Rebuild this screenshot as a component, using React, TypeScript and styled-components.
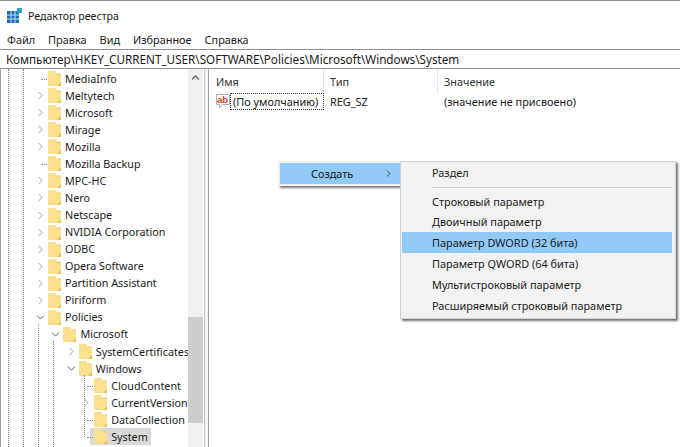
import React from "react";
import styled, { createGlobalStyle } from "styled-components";
import { ChevronRight, ChevronDown, ChevronUp } from "lucide-react";

const GlobalStyle = createGlobalStyle`
  html, body {
    margin: 0;
    padding: 0;
    background: #fff;
  }
`;

const Window = styled.div`
  width: 680px;
  height: 447px;
  position: relative;
  overflow: hidden;
  box-sizing: border-box;
  border-top: 1px solid #8a8a8a;
  background: #fff;
  color: #1a1a1a;
  font-family: "Noto Sans", "Liberation Sans", sans-serif;
  font-size: 10.9px;
  display: flex;
  flex-direction: column;
`;

const TitleBar = styled.div`
  height: 29px;
  display: flex;
  align-items: center;
  gap: 6px;
  padding-left: 7px;
  font-size: 10.6px;
`;

const MenuBar = styled.div`
  height: 19px;
  display: flex;
  align-items: center;
  gap: 13px;
  padding-left: 7px;
`;

const AddressBar = styled.div`
  height: 20px;
  box-sizing: border-box;
  display: flex;
  align-items: center;
  padding-left: 6px;
  border-top: 1px solid #8f8f8f;
  border-bottom: 1px solid #8f8f8f;
  font-size: 11.7px;
  white-space: nowrap;
`;

const Main = styled.div`
  flex: 1;
  min-height: 0;
  display: flex;
`;

const TreePane = styled.div`
  width: 205px;
  position: relative;
  display: flex;
  box-sizing: border-box;
  border-left: 1px solid #a0a0a0;
  border-right: 1px solid #c4c4c4;
  overflow: hidden;
`;

const TreeList = styled.div`
  flex: 1;
  min-width: 0;
  padding-top: 1px;
  overflow: hidden;
  font-size: 10.75px;
`;

const Row = styled.div<{ $level: number }>`
  height: 17.07px;
  display: flex;
  align-items: center;
  padding-left: ${(p) => 32 + p.$level * 15.4}px;
  white-space: nowrap;
`;

const Toggle = styled.span`
  width: 15px;
  height: 15px;
  flex: none;
  display: flex;
  align-items: center;
  justify-content: center;
  color: #8c8c8c;
  position: relative;
`;

const Stub = styled.span`
  position: absolute;
  left: 8px;
  width: 6px;
  top: 8px;
  border-top: 1px dotted #8a8a8a;
`;

const Label = styled.span<{ $selected?: boolean }>`
  display: flex;
  align-items: center;
  gap: 4px;
  height: 17px;
  background: ${(p) => (p.$selected ? "#d9d9d9" : "transparent")};
  margin-left: ${(p) => (p.$selected ? "-4px" : "0")};
  padding: ${(p) => (p.$selected ? "0 3px 0 4px" : "0")};
`;

const Guide = styled.span<{ $left: number; $top: number; $height: number }>`
  position: absolute;
  left: ${(p) => p.$left}px;
  top: ${(p) => p.$top}px;
  height: ${(p) => p.$height}px;
  border-left: 1px dotted #8a8a8a;
`;

const ScrollTrack = styled.div`
  width: 15px;
  margin-right: 1px;
  flex: none;
  background: #f0f0f0;
  display: flex;
  flex-direction: column;
  align-items: center;
  padding-top: 2px;
  color: #505050;
  position: relative;
`;

const ScrollThumb = styled.div`
  position: absolute;
  left: 0;
  right: 0;
  top: 248px;
  height: 106px;
  background: #cdcdcd;
`;

const Splitter = styled.div`
  width: 3px;
  flex: none;
  background: #f4f4f4;
`;

const ListPane = styled.div`
  flex: 1;
  min-width: 0;
  border-left: 1px solid #a0a0a0;
  padding-left: 7px;
`;

const ListGrid = styled.div`
  display: grid;
  grid-template-columns: 108px 114px 1fr;
`;

const HeaderCell = styled.div<{ $pad?: boolean; $last?: boolean }>`
  height: 23px;
  box-sizing: border-box;
  padding-top: 1px;
  display: flex;
  align-items: center;
  padding-left: ${(p) => (p.$pad ? "6px" : "0")};
  border-right: ${(p) => (p.$last ? "0" : "1px solid #e5e5e5")};
  color: #333;
`;

const ValueCell = styled.div<{ $pad?: boolean }>`
  height: 18px;
  display: flex;
  align-items: center;
  padding-left: ${(p) => (p.$pad ? "6px" : "0")};
`;

const ValueName = styled.span`
  border: 1px dotted #333;
  flex: 1;
  height: 17px;
  display: flex;
  align-items: center;
  box-sizing: border-box;
  padding-left: 2px;
  white-space: nowrap;
`;

const ContextMenus = styled.div`
  position: absolute;
  left: 278px;
  top: 160px;
  display: flex;
  align-items: flex-start;
`;

const ParentMenu = styled.div`
  width: 122px;
  height: 25px;
  box-sizing: border-box;
  background: #91c9f7;
  border: 2px solid #f0f0f0;
  border-right: 0;
  box-shadow: 2px 2px 2px #777;
  display: flex;
  align-items: center;
  justify-content: space-between;
  padding: 0 6px 0 31px;
  color: #1a1a1a;
`;

const SubMenu = styled.div`
  width: 276px;
  height: 158px;
  box-sizing: border-box;
  background: #f2f2f2;
  border: 1px solid #cfcfcf;
  box-shadow: 2px 2px 2px #777;
  padding: 0 3px 0 1px;
`;

const MenuItem = styled.div<{ $active?: boolean }>`
  height: 20.8px;
  display: flex;
  align-items: center;
  padding-left: 30px;
  background: ${(p) => (p.$active ? "#91c9f7" : "transparent")};
`;

const MenuSeparator = styled.div`
  height: 1px;
  background: #d0d0d0;
  margin: 4px 0 3px 30px;
`;

function RegistryIcon() {
  return (
    <svg width="15" height="15" viewBox="0 0 15 15">
      <rect x="0" y="3" width="12" height="12" fill="#1c6fb5" />
      <path d="M4 3v12M8 3v12M0 7h12M0 11h12" stroke="#bfe0f5" strokeWidth="1" />
      <path d="M10 0h5v5h-5z" fill="#2fa0dc" />
    </svg>
  );
}

function FolderIcon() {
  return (
    <svg width="13" height="15" viewBox="0 0 13 15" style={{ flex: "none" }}>
      <path d="M0 0h7.5l1 3H13v12H0z" fill="#fbe08f" />
      <path d="M9 15h4v-4z" fill="#e9bd5a" />
      <path d="M8.5 3h4.5" stroke="#eec86e" strokeWidth="1" />
    </svg>
  );
}

function ValueIcon() {
  return (
    <svg width="14" height="15" viewBox="0 0 14 15" style={{ flex: "none" }}>
      <path d="M0.5 0.5h13v10h-7l-3 3v-3h-3z" fill="#fff" stroke="#b0b0b0" strokeWidth="1" />
      <text x="1" y="8.5" fontSize="9.5" fontWeight="700" fontFamily="Liberation Sans, sans-serif" fill="#c8402c">
        ab
      </text>
    </svg>
  );
}

type TreeItem = {
  name: string;
  level: number;
  toggle: "closed" | "open" | "none";
  selected?: boolean;
};

const TREE: TreeItem[] = [
  { name: "MediaInfo", level: 0, toggle: "none" },
  { name: "Meltytech", level: 0, toggle: "closed" },
  { name: "Microsoft", level: 0, toggle: "closed" },
  { name: "Mirage", level: 0, toggle: "closed" },
  { name: "Mozilla", level: 0, toggle: "closed" },
  { name: "Mozilla Backup", level: 0, toggle: "none" },
  { name: "MPC-HC", level: 0, toggle: "closed" },
  { name: "Nero", level: 0, toggle: "closed" },
  { name: "Netscape", level: 0, toggle: "closed" },
  { name: "NVIDIA Corporation", level: 0, toggle: "closed" },
  { name: "ODBC", level: 0, toggle: "closed" },
  { name: "Opera Software", level: 0, toggle: "closed" },
  { name: "Partition Assistant", level: 0, toggle: "closed" },
  { name: "Piriform", level: 0, toggle: "closed" },
  { name: "Policies", level: 0, toggle: "open" },
  { name: "Microsoft", level: 1, toggle: "open" },
  { name: "SystemCertificates", level: 2, toggle: "closed" },
  { name: "Windows", level: 2, toggle: "open" },
  { name: "CloudContent", level: 3, toggle: "none" },
  { name: "CurrentVersion", level: 3, toggle: "closed" },
  { name: "DataCollection", level: 3, toggle: "none" },
  { name: "System", level: 3, toggle: "none", selected: true },
];

const SUBMENU_BOTTOM = [
  "Строковый параметр",
  "Двоичный параметр",
  "Параметр DWORD (32 бита)",
  "Параметр QWORD (64 бита)",
  "Мультистроковый параметр",
  "Расширяемый строковый параметр",
];

export default function App() {
  return (
    <Window>
      <GlobalStyle />
      <TitleBar>
        <RegistryIcon />
        Редактор реестра
      </TitleBar>
      <MenuBar>
        <span>Файл</span>
        <span>Правка</span>
        <span>Вид</span>
        <span>Избранное</span>
        <span>Справка</span>
      </MenuBar>
      <AddressBar>Компьютер\HKEY_CURRENT_USER\SOFTWARE\Policies\Microsoft\Windows\System</AddressBar>
      <Main>
        <TreePane>
          <Guide $left={7} $top={0} $height={378} />
          <Guide $left={22} $top={0} $height={378} />
          <Guide $left={37} $top={255} $height={123} />
          <Guide $left={52} $top={272} $height={106} />
          <Guide $left={83} $top={306} $height={62} />
          <TreeList>
            {TREE.map((item, i) => (
              <Row key={i} $level={item.level}>
                <Toggle>
                  {item.toggle === "closed" && <ChevronRight size={13} strokeWidth={1.5} />}
                  {item.toggle === "open" && <ChevronDown size={13} strokeWidth={1.5} color="#404040" />}
                  {item.toggle === "none" && <Stub />}
                </Toggle>
                <Label $selected={item.selected}>
                  <FolderIcon />
                  {item.name}
                </Label>
              </Row>
            ))}
          </TreeList>
          <ScrollTrack>
            <ChevronUp size={13} strokeWidth={2} />
            <ScrollThumb />
          </ScrollTrack>
        </TreePane>
        <Splitter />
        <ListPane>
          <ListGrid>
            <HeaderCell>Имя</HeaderCell>
            <HeaderCell $pad>Тип</HeaderCell>
            <HeaderCell $pad $last>Значение</HeaderCell>
            <ValueCell>
              <ValueIcon />
              <ValueName>(По умолчанию)</ValueName>
            </ValueCell>
            <ValueCell $pad>REG_SZ</ValueCell>
            <ValueCell $pad>(значение не присвоено)</ValueCell>
          </ListGrid>
        </ListPane>
      </Main>
      <ContextMenus>
        <ParentMenu>
          Создать
          <ChevronRight size={11} strokeWidth={1.5} />
        </ParentMenu>
        <SubMenu>
          <MenuItem>Раздел</MenuItem>
          <MenuSeparator />
          {SUBMENU_BOTTOM.map((label, i) => (
            <MenuItem key={label} $active={i === 2}>
              {label}
            </MenuItem>
          ))}
        </SubMenu>
      </ContextMenus>
    </Window>
  );
}
